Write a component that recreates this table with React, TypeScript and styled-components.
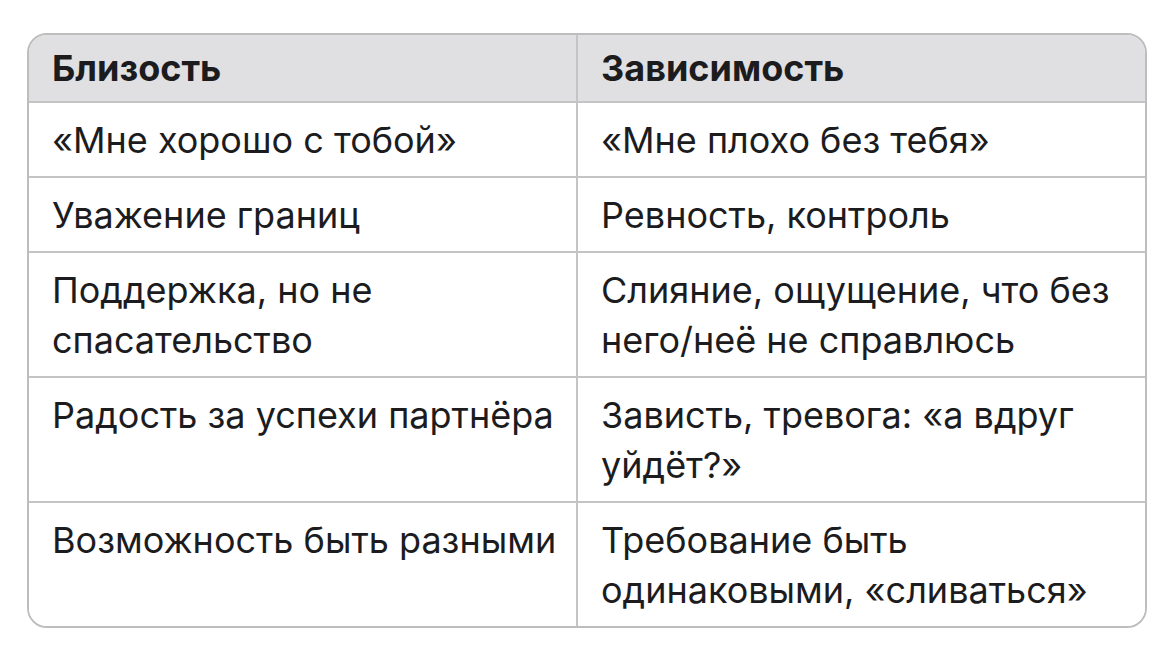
import React from 'react';
import styled, { createGlobalStyle } from 'styled-components';

const GlobalStyle = createGlobalStyle`
  html, body {
    margin: 0;
    padding: 0;
    background: #ffffff;
  }
  body {
    font-family: Inter, 'Noto Sans', 'Liberation Sans', sans-serif;
    -webkit-font-smoothing: antialiased;
  }
`;

const Page = styled.div`
  width: 1170px;
  height: 654px;
  box-sizing: border-box;
  padding: 33px 23px 0 27px;
`;

const Frame = styled.div`
  border: 2px solid #bdbdbd;
  border-radius: 20px;
  overflow: hidden;
  display: grid;
  grid-template-columns: 549px 1fr;
`;

const Cell = styled.div<{ $head?: boolean; $first?: boolean; $last?: boolean }>`
  box-sizing: border-box;
  padding: ${p => (p.$head ? '12px 14px 12px 23px' : '12px 14px 11px 23px')};
  font-size: 36px;
  line-height: ${p => (p.$head ? '42px' : '50px')};
  font-weight: ${p => (p.$head ? 700 : 400)};
  color: #1c1c1e;
  background: ${p => (p.$head ? '#e0e0e2' : '#ffffff')};
  border-bottom: ${p => (p.$last ? 'none' : '2px solid #c4c4c4')};
  border-right: ${p => (p.$first ? '2px solid #c4c4c4' : 'none')};
`;

const rows: [string, string][] = [
  ['«Мне хорошо с тобой»', '«Мне плохо без тебя»'],
  ['Уважение границ', 'Ревность, контроль'],
  ['Поддержка, но не спасательство', 'Слияние, ощущение, что без него/неё не справлюсь'],
  ['Радость за успехи партнёра', 'Зависть, тревога: «а вдруг уйдёт?»'],
  ['Возможность быть разными', 'Требование быть одинаковыми, «сливаться»'],
];

const App: React.FC = () => {
  return (
    <>
      <GlobalStyle />
      <Page>
        <Frame>
          <Cell $head $first>Близость</Cell>
          <Cell $head>Зависимость</Cell>
          {rows.map(([a, b], i) => {
            const last = i === rows.length - 1;
            return (
              <React.Fragment key={a}>
                <Cell $first $last={last}>{a}</Cell>
                <Cell $last={last}>{b}</Cell>
              </React.Fragment>
            );
          })}
        </Frame>
      </Page>
    </>
  );
};

export default App;
